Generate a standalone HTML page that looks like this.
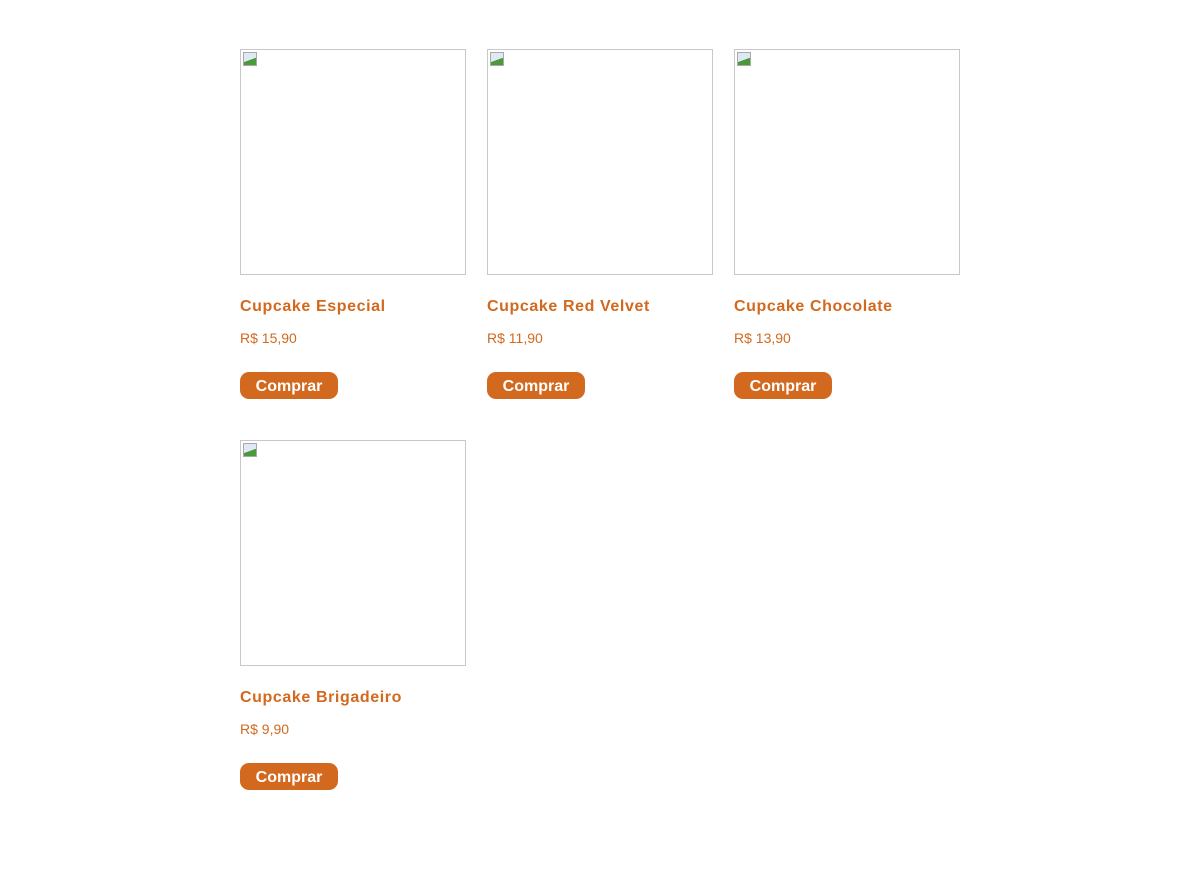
<!DOCTYPE html>
<html><head><style>
body{margin:0;background:#fff;font-family:"Liberation Sans",sans-serif;}
.card{position:absolute;width:226px;}
.img{width:224px;height:224px;border:1px solid #c8c8c8;position:relative;}
.img:before{content:"";position:absolute;left:2px;top:2px;width:14px;height:14px;background:linear-gradient(160deg,#dfe8f5 55%,#4a9a3a 56%);border:1px solid #aaa;box-sizing:border-box;}
.t{position:absolute;top:249px;left:0;color:#d2691e;font-weight:bold;font-size:16px;letter-spacing:0.6px;white-space:nowrap;}
.p{position:absolute;top:281px;left:0;color:#d2691e;font-size:14px;white-space:nowrap;}
.b{position:absolute;top:323px;left:0;height:27px;width:98px;background:#d2691e;border-radius:9px;color:#fff;font-weight:bold;font-size:16px;text-align:center;line-height:29px;}
</style></head><body>
<div class="card" style="left:240px;top:49px"><div class="img"></div><div class="t">Cupcake Especial</div><div class="p">R$ 15,90</div><div class="b">Comprar</div></div>
<div class="card" style="left:487px;top:49px"><div class="img"></div><div class="t">Cupcake Red Velvet</div><div class="p">R$ 11,90</div><div class="b">Comprar</div></div>
<div class="card" style="left:734px;top:49px"><div class="img"></div><div class="t">Cupcake Chocolate</div><div class="p">R$ 13,90</div><div class="b">Comprar</div></div>
<div class="card" style="left:240px;top:440px"><div class="img"></div><div class="t">Cupcake Brigadeiro</div><div class="p">R$ 9,90</div><div class="b">Comprar</div></div>
</body></html>
